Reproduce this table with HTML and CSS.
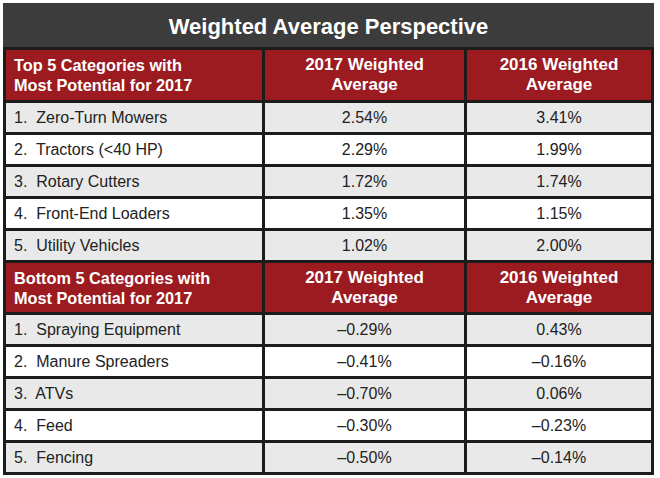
FILE: index.html
```html
<!DOCTYPE html>
<html>
<head>
<meta charset="utf-8">
<link rel="stylesheet" href="styles.css">
</head>
<body>
<div class="table">
  <div class="title">Weighted Average Perspective</div>

  <div class="head first">Top 5 Categories with<br>Most Potential for 2017</div>
  <div class="head">2017 Weighted<br>Average</div>
  <div class="head">2016 Weighted<br>Average</div>

  <div class="cell first alt">1.&nbsp; Zero-Turn Mowers</div><div class="cell alt">2.54%</div><div class="cell alt">3.41%</div>
  <div class="cell first">2.&nbsp; Tractors (&lt;40 HP)</div><div class="cell">2.29%</div><div class="cell">1.99%</div>
  <div class="cell first alt">3.&nbsp; Rotary Cutters</div><div class="cell alt">1.72%</div><div class="cell alt">1.74%</div>
  <div class="cell first">4.&nbsp; Front-End Loaders</div><div class="cell">1.35%</div><div class="cell">1.15%</div>
  <div class="cell first alt">5.&nbsp; Utility Vehicles</div><div class="cell alt">1.02%</div><div class="cell alt">2.00%</div>

  <div class="head first">Bottom 5 Categories with<br>Most Potential for 2017</div>
  <div class="head">2017 Weighted<br>Average</div>
  <div class="head">2016 Weighted<br>Average</div>

  <div class="cell first alt">1.&nbsp; Spraying Equipment</div><div class="cell alt">–0.29%</div><div class="cell alt">0.43%</div>
  <div class="cell first">2.&nbsp; Manure Spreaders</div><div class="cell">–0.41%</div><div class="cell">–0.16%</div>
  <div class="cell first alt">3.&nbsp; ATVs</div><div class="cell alt">–0.70%</div><div class="cell alt">0.06%</div>
  <div class="cell first">4.&nbsp; Feed</div><div class="cell">–0.30%</div><div class="cell">–0.23%</div>
  <div class="cell first alt">5.&nbsp; Fencing</div><div class="cell alt">–0.50%</div><div class="cell alt">–0.14%</div>
</div>
</body>
</html>
```
FILE: styles.css
```css
html, body {
  margin: 0;
  padding: 0;
  background: #ffffff;
}
body {
  padding: 3px;
  font-family: "Liberation Sans", Arial, sans-serif;
}
.table {
  width: 645px;
  background: #1c1c1c;
  padding: 3px;
  display: grid;
  grid-template-columns: 256px 199px 184px;
  grid-template-rows: 41px 50px repeat(5, 29px) 49px repeat(5, 29px);
  gap: 3px;
}
.title {
  grid-column: 1 / 4;
  background: #3c3c3c;
  color: #ffffff;
  font-weight: bold;
  font-size: 22px;
  display: flex;
  align-items: center;
  justify-content: center;
  margin: -3px -3px 0 -3px;
  padding-top: 3px;
}
.head {
  background: #9b1b21;
  color: #ffffff;
  font-weight: bold;
  font-size: 17px;
  line-height: 20px;
  display: flex;
  align-items: center;
  justify-content: center;
  text-align: center;
}
.head.first {
  font-size: 16.3px;
  justify-content: flex-start;
  text-align: left;
  padding-left: 8px;
}
.cell {
  background: #ffffff;
  color: #222222;
  font-size: 16px;
  display: flex;
  align-items: center;
  justify-content: center;
}
.cell.alt {
  background: #e9e9e9;
}
.cell.first {
  justify-content: flex-start;
  padding-left: 8px;
}
```
